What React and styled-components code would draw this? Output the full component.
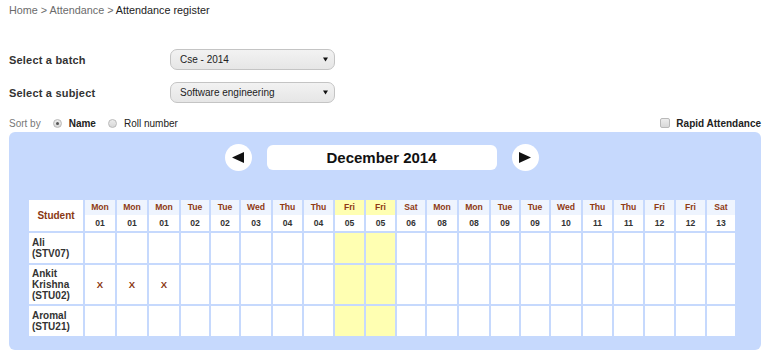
import React from "react";
import styled, { createGlobalStyle } from "styled-components";

const GlobalStyle = createGlobalStyle`
  html, body { margin: 0; padding: 0; background: #ffffff; }
  body { font-family: "Liberation Sans", Arial, sans-serif; color: #333; }
  * { box-sizing: border-box; }
`;

const Page = styled.div`
  width: 768px;
  padding: 3px 7px 0 9px;
`;

const Breadcrumb = styled.div`
  font-size: 10.8px;
  line-height: 14px;
  height: 14px;
  color: #6b6b6b;
  white-space: nowrap;
`;

const Current = styled.span`
  color: #222;
`;

const Form = styled.div`
  margin-top: 32px;
  display: grid;
  row-gap: 12px;
`;

const FieldRow = styled.div`
  display: flex;
  align-items: center;
  height: 21px;
`;

const Label = styled.div`
  width: 161px;
  font-size: 11px;
  font-weight: bold;
  color: #333;
  letter-spacing: 0.2px;
`;

const SelectBox = styled.div`
  width: 165px;
  height: 21px;
  display: flex;
  align-items: center;
  justify-content: space-between;
  padding: 0 6px 0 9px;
  border: 1px solid #c4c4c4;
  border-radius: 7px;
  background: linear-gradient(#f2f2f2, #e6e6e6);
  font-size: 10px;
  color: #222;
`;

const OptionsBar = styled.div`
  margin-top: 13px;
  height: 14px;
  display: flex;
  align-items: center;
  justify-content: space-between;
  font-size: 10px;
`;

const Group = styled.div`
  display: flex;
  align-items: center;
`;

const Muted = styled.span`
  color: #777;
  margin-right: 12px;
`;

const Radio = styled.span`
  width: 9px;
  height: 9px;
  border-radius: 50%;
  border: 1px solid #b9b9b9;
  background: linear-gradient(#ececec, #d8d8d8);
  display: inline-flex;
  align-items: center;
  justify-content: center;
  margin-right: 7px;
  &::after {
    content: "";
    width: 3px;
    height: 3px;
    border-radius: 50%;
    background: ${(p) => (p.$checked ? "#555" : "transparent")};
  }
`;

const OptionText = styled.span`
  color: #222;
  font-weight: ${(p) => (p.$bold ? "bold" : "normal")};
  margin-right: ${(p) => p.$mr || 0}px;
`;

const Checkbox = styled.span`
  width: 10px;
  height: 10px;
  border-radius: 2px;
  border: 1px solid #b9b9b9;
  background: linear-gradient(#ececec, #d8d8d8);
  margin-right: 6px;
`;

const Panel = styled.div`
  margin-top: 2px;
  background: #c6d9fd;
  border-radius: 6px;
  padding: 11px 18px 12px;
`;

const MonthNav = styled.div`
  display: flex;
  align-items: center;
  justify-content: center;
  padding-right: 7px;
  height: 28px;
`;

const NavButton = styled.div`
  width: 27px;
  height: 27px;
  border-radius: 50%;
  background: #ffffff;
  display: flex;
  align-items: center;
  justify-content: center;
`;

const MonthBox = styled.div`
  width: 230px;
  height: 25px;
  margin: 0 ${(p) => p.$gap}px;
  background: #ffffff;
  border-radius: 6px;
  display: flex;
  align-items: center;
  justify-content: center;
  font-size: 15px;
  font-weight: bold;
  color: #111;
`;

const Table = styled.table`
  margin-top: 27px;
  border-collapse: separate;
  border-spacing: 2px;
  table-layout: fixed;
  width: 708px;
`;

const StudentHead = styled.th`
  width: 54px;
  height: 31px;
  padding: 0;
  background: #ffffff;
  color: #8a3812;
  font-size: 10px;
  font-weight: bold;
`;

const DayHead = styled.th`
  width: ${(p) => p.$w}px;
  padding: 0;
  vertical-align: top;
`;

const DayName = styled.div`
  height: 15px;
  line-height: 15px;
  background: ${(p) => (p.$hl ? "#ffffb2" : "#eef4fe")};
  color: #8f3a14;
  font-size: 8.6px;
  font-weight: bold;
  text-align: center;
`;

const DayNum = styled.div`
  height: 16px;
  line-height: 16px;
  background: #ffffff;
  color: #333;
  font-size: 8.6px;
  font-weight: bold;
  text-align: center;
`;

const NameCell = styled.td`
  height: 30px;
  padding: 3px;
  background: #ffffff;
  font-size: 10px;
  line-height: 11px;
  font-weight: bold;
  color: #333;
  vertical-align: middle;
`;

const MarkCell = styled.td`
  padding: 0;
  background: ${(p) => (p.$hl ? "#ffffb2" : "#ffffff")};
  text-align: center;
  vertical-align: middle;
  color: #8a3812;
  font-size: 9.5px;
  font-weight: bold;
`;

const days = [
  ["Mon", "01", 30], ["Mon", "01", 30], ["Mon", "01", 30],
  ["Tue", "02", 28], ["Tue", "02", 28], ["Wed", "03", 30],
  ["Thu", "04", 29], ["Thu", "04", 29], ["Fri", "05", 29, true],
  ["Fri", "05", 29, true], ["Sat", "06", 28], ["Mon", "08", 30],
  ["Mon", "08", 30], ["Tue", "09", 28], ["Tue", "09", 28],
  ["Wed", "10", 30], ["Thu", "11", 29], ["Thu", "11", 29],
  ["Fri", "12", 29], ["Fri", "12", 29], ["Sat", "13", 28],
];

const students = [
  { name: ["Ali", "(STV07)"], marks: [] },
  { name: ["Ankit", "Krishna", "(STU02)"], marks: [0, 1, 2] },
  { name: ["Aromal", "(STU21)"], marks: [] },
];

const Caret = () => (
  <svg width="5" height="5" viewBox="0 0 5 5">
    <polygon points="0,0.5 5,0.5 2.5,4.5" fill="#111" />
  </svg>
);

const Arrow = ({ dir }) => (
  <svg width="12" height="11" viewBox="0 0 12 11">
    {dir === "left" ? (
      <polygon points="12,0 12,11 0,5.5" fill="#111" />
    ) : (
      <polygon points="0,0 0,11 12,5.5" fill="#111" />
    )}
  </svg>
);

export default function App() {
  return (
    <>
      <GlobalStyle />
      <Page>
        <Breadcrumb>
          Home &gt; Attendance &gt; <Current>Attendance register</Current>
        </Breadcrumb>
        <Form>
          <FieldRow>
            <Label>Select a batch</Label>
            <SelectBox>
              <span>Cse - 2014</span>
              <Caret />
            </SelectBox>
          </FieldRow>
          <FieldRow>
            <Label>Select a subject</Label>
            <SelectBox>
              <span>Software engineering</span>
              <Caret />
            </SelectBox>
          </FieldRow>
        </Form>
        <OptionsBar>
          <Group>
            <Muted>Sort by</Muted>
            <Radio $checked />
            <OptionText $bold $mr={12}>Name</OptionText>
            <Radio />
            <OptionText>Roll number</OptionText>
          </Group>
          <Group>
            <Checkbox />
            <OptionText $bold>Rapid Attendance</OptionText>
          </Group>
        </OptionsBar>
        <Panel>
          <MonthNav>
            <NavButton>
              <Arrow dir="left" />
            </NavButton>
            <MonthBox $gap={15}>December 2014</MonthBox>
            <NavButton>
              <Arrow dir="right" />
            </NavButton>
          </MonthNav>
          <Table>
            <thead>
              <tr>
                <StudentHead>Student</StudentHead>
                {days.map(([d, n, w, hl], i) => (
                  <DayHead key={i} $w={w}>
                    <DayName $hl={hl}>{d}</DayName>
                    <DayNum>{n}</DayNum>
                  </DayHead>
                ))}
              </tr>
            </thead>
            <tbody>
              {students.map((s, r) => (
                <tr key={r}>
                  <NameCell>
                    {s.name.map((l, k) => (
                      <div key={k}>{l}</div>
                    ))}
                  </NameCell>
                  {days.map((d, i) => (
                    <MarkCell key={i} $hl={d[3]}>
                      {s.marks.includes(i) ? "X" : ""}
                    </MarkCell>
                  ))}
                </tr>
              ))}
            </tbody>
          </Table>
        </Panel>
      </Page>
    </>
  );
}
